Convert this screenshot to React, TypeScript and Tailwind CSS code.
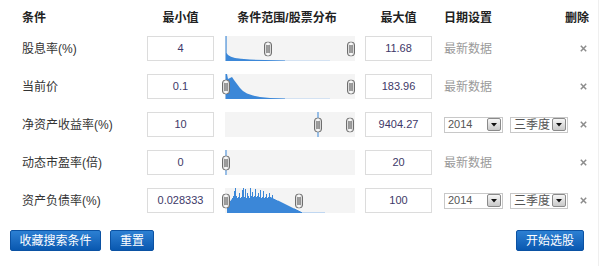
import React from "react";

const BLUE = "#3b87d8";
const TAIL = "#b3d0f0";

function Handle({ x }: { x: number }) {
  return (
    <svg
      className="absolute top-1/2 -translate-y-1/2"
      style={{ left: x - 4 }}
      width="8"
      height="15"
      viewBox="0 0 8 15"
    >
      <defs>
        <linearGradient id="hg" x1="0" y1="0" x2="1" y2="0">
          <stop offset="0" stopColor="#d0d0d0" />
          <stop offset="0.5" stopColor="#ffffff" />
          <stop offset="1" stopColor="#c8c8c8" />
        </linearGradient>
      </defs>
      <rect x="0.5" y="0.5" width="7" height="14" rx="3" fill="url(#hg)" stroke="#6e6e6e" />
      <line x1="3" y1="3.5" x2="3" y2="11.5" stroke="#444" strokeWidth="1" />
      <line x1="5" y1="3.5" x2="5" y2="11.5" stroke="#444" strokeWidth="1" />
    </svg>
  );
}

function hist5Path(): string {
  const spikes: Record<number, number> = {
    9: 22, 10: 25, 14: 20, 17: 23, 18: 25, 20: 24, 22: 20, 25: 25, 27: 21, 30: 24, 33: 20, 35: 23, 38: 22, 41: 19, 44: 20, 47: 18,
  };
  let d = "M2,25";
  for (let x = 2; x <= 76; x++) {
    let h: number;
    if (x < 8) h = 8 + (x - 2) * 1.4;
    else if (x < 45) h = 16 + ((x * 7) % 3) - 1;
    else h = 16 - ((x - 45) * 15) / 31;
    if (spikes[x]) h = spikes[x];
    const y = 25 - h;
    d += ` L${x},${y} L${x + 1},${y}`;
  }
  d += " L77,25 Z";
  return d;
}

function Hist({ kind }: { kind: number }) {
  if (kind === 1) {
    return (
      <svg className="absolute inset-0" width="130" height="25" viewBox="0 0 130 25">
        <path d="M2,25 L2,24.5 L105,24.5 L105,25 Z" fill={TAIL} />
        <path
          d="M0.5,25 L0.5,0 L1.6,0 L1.6,17 L3,19 L6,20.8 L10,22 L16,22.8 L25,23.5 L40,24.1 L60,24.5 L60,25 Z"
          fill={BLUE}
        />
      </svg>
    );
  }
  if (kind === 2) {
    return (
      <svg className="absolute inset-0" width="130" height="25" viewBox="0 0 130 25">
        <path d="M2,25 L2,24.4 L105,24.4 L105,25 Z" fill={TAIL} />
        <path
          d="M0.5,25 L0.5,0 L2,0 L3,5 L5,4 L7,3 L9,6 L12,10 L15,14 L18,17 L22,19.5 L28,21.5 L35,23 L45,24 L60,24.5 L60,25 Z"
          fill={BLUE}
        />
      </svg>
    );
  }
  if (kind === 3) {
    return (
      <svg className="absolute inset-0" width="130" height="25" viewBox="0 0 130 25">
        <line x1="93" y1="0" x2="93" y2="25" stroke={BLUE} strokeWidth="1" />
      </svg>
    );
  }
  if (kind === 4) {
    return (
      <svg className="absolute inset-0" width="130" height="25" viewBox="0 0 130 25">
        <line x1="1" y1="0" x2="1" y2="25" stroke={BLUE} strokeWidth="1" />
      </svg>
    );
  }
  return (
    <svg className="absolute inset-0" width="130" height="25" viewBox="0 0 130 25">
      <path d="M75,25 L75,24.2 L100,24.2 L100,25 Z" fill={TAIL} />
      <path d={hist5Path()} fill={BLUE} />
    </svg>
  );
}

function Select({ text, w, num }: { text: string; w: string; num?: boolean }) {
  return (
    <div
      className={`${w} h-[16px] border border-[#c8c8c8] bg-white flex items-center justify-between pl-[3px] pr-[1px] ${num ? "text-[11px]" : "text-[12px]"} text-[#555] leading-none`}
    >
      <span>{text}</span>
      <span className="w-[14px] h-[13px] border border-[#8a8a8a] rounded-[2px] bg-gradient-to-b from-[#f6f6f6] to-[#c9c9c9] flex items-center justify-center">
        <svg width="6" height="4" viewBox="0 0 6 4">
          <path d="M0,0 L6,0 L3,3.5 Z" fill="#111" />
        </svg>
      </span>
    </div>
  );
}

function DelIcon() {
  return (
    <svg width="7" height="7" viewBox="0 0 7 7">
      <path d="M0.8,0.8 L6.2,6.2 M6.2,0.8 L0.8,6.2" stroke="#8c8c8c" strokeWidth="1.5" />
    </svg>
  );
}

type Row = {
  label: string;
  min: string;
  max: string;
  hist: number;
  handles: number[];
  dated: boolean;
};

const rows: Row[] = [
  { label: "股息率(%)", min: "4", max: "11.68", hist: 1, handles: [43, 126], dated: false },
  { label: "当前价", min: "0.1", max: "183.96", hist: 2, handles: [1, 126], dated: false },
  { label: "净资产收益率(%)", min: "10", max: "9404.27", hist: 3, handles: [93, 125], dated: true },
  { label: "动态市盈率(倍)", min: "0", max: "20", hist: 4, handles: [1], dated: false },
  { label: "资产负债率(%)", min: "0.028333", max: "100", hist: 5, handles: [1, 74], dated: true },
];

export default function App() {
  return (
    <div
      className="w-[599px] h-[266px] bg-white border-r border-[#efefef] text-[#333] text-[12px]"
      style={{ fontFamily: '"Liberation Sans", "Noto Sans CJK SC", sans-serif' }}
    >
      {/* header */}
      <div className="flex items-center h-[36px] font-bold text-[#222]">
        <div className="w-[147px] pl-[22px]">条件</div>
        <div className="w-[67px] text-center">最小值</div>
        <div className="ml-[10px] w-[126px] text-center">条件范围/股票分布</div>
        <div className="ml-[15px] w-[67px] text-center">最大值</div>
        <div className="ml-[12px] w-[121px]">日期设置</div>
        <div>删除</div>
      </div>

      <div className="flex flex-col gap-[13px]">
        {rows.map((r) => (
          <div key={r.label} className="flex items-center h-[25px]">
            <div className="w-[147px] pl-[22px]">{r.label}</div>
            <div className="w-[67px] h-[25px] border border-[#dcdcdc] flex items-center justify-center text-[11px] text-[#3d3868]">
              {r.min}
            </div>
            <div className="ml-[11px] w-[130px] h-[25px] bg-[#f4f4f4] relative">
              <Hist kind={r.hist} />
              {r.handles.map((h) => (
                <Handle key={h} x={h} />
              ))}
            </div>
            <div className="ml-[10px] w-[67px] h-[25px] border border-[#dcdcdc] flex items-center justify-center text-[11px] text-[#3d3868]">
              {r.max}
            </div>
            <div className="ml-[12px] w-[125px] flex items-center">
              {r.dated ? (
                <div className="flex items-center gap-[7px]">
                  <Select text="2014" w="w-[59px]" num />
                  <Select text="三季度" w="w-[58px]" />
                </div>
              ) : (
                <span className="text-[#9a9a9a]">最新数据</span>
              )}
            </div>
            <div className="w-[28px] flex justify-center">
              <DelIcon />
            </div>
          </div>
        ))}
      </div>

      <div className="mt-[17px] flex items-center justify-between pl-[10px] pr-[14px]">
        <div className="flex gap-[9px]">
          <button className="w-[91px] h-[21px] rounded-[2px] border border-[#0b52a3] bg-gradient-to-b from-[#2c80d3] to-[#0858b0] text-white text-[12px] leading-none">
            收藏搜索条件
          </button>
          <button className="w-[44px] h-[21px] rounded-[2px] border border-[#0b52a3] bg-gradient-to-b from-[#2c80d3] to-[#0858b0] text-white text-[12px] leading-none">
            重置
          </button>
        </div>
        <button className="w-[68px] h-[21px] rounded-[2px] border border-[#0b52a3] bg-gradient-to-b from-[#2c80d3] to-[#0858b0] text-white text-[12px] leading-none">
          开始选股
        </button>
      </div>
    </div>
  );
}
